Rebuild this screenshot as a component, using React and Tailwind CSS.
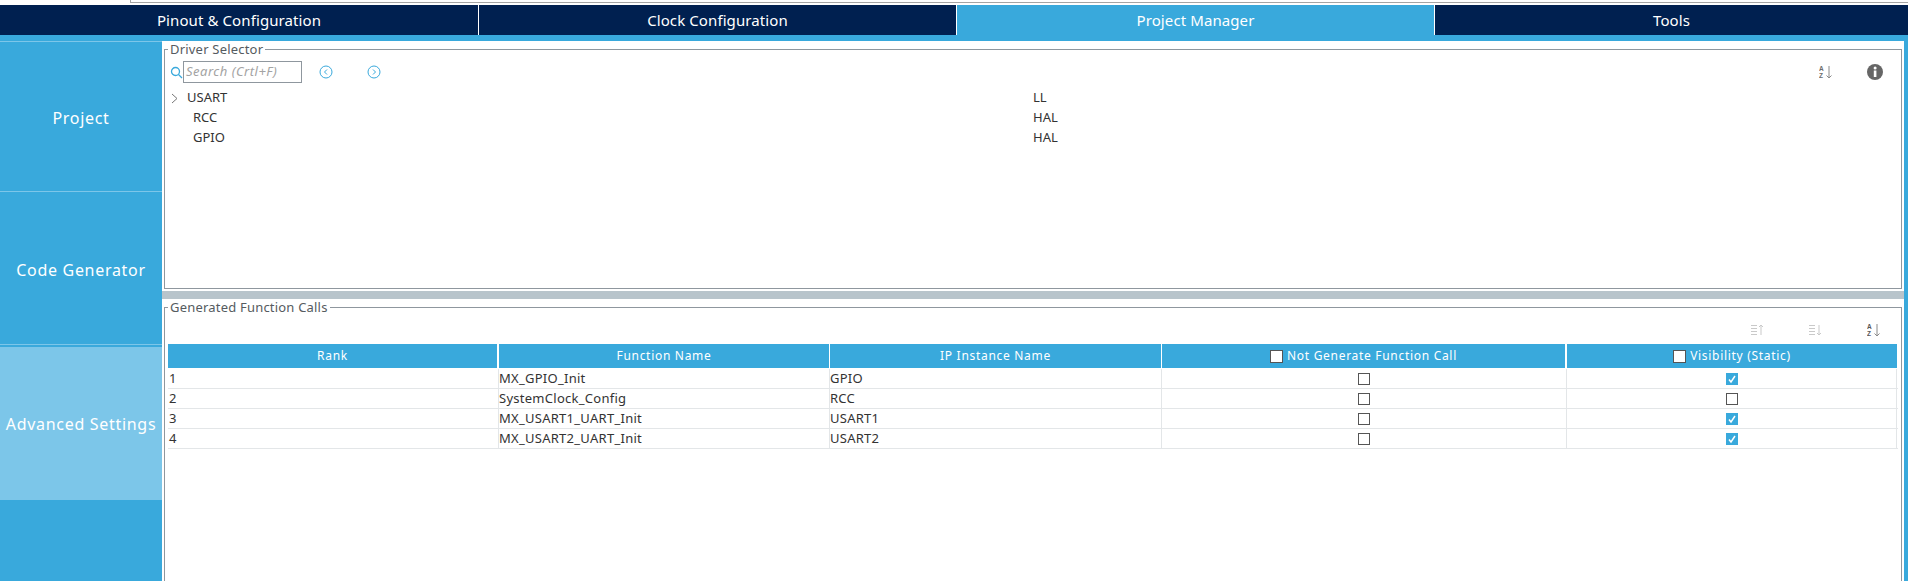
import React from 'react';

const tabs = ['Pinout & Configuration', 'Clock Configuration', 'Project Manager', 'Tools'];

const drivers = [
  { name: 'USART', lib: 'LL', expandable: true },
  { name: 'RCC', lib: 'HAL' },
  { name: 'GPIO', lib: 'HAL' },
];

const calls = [
  { rank: 1, fn: 'MX_GPIO_Init', ip: 'GPIO', visible: true },
  { rank: 2, fn: 'SystemClock_Config', ip: 'RCC', visible: false },
  { rank: 3, fn: 'MX_USART1_UART_Init', ip: 'USART1', visible: true },
  { rank: 4, fn: 'MX_USART2_UART_Init', ip: 'USART2', visible: true },
];

const COLS = 'grid grid-cols-[329px_2px_330px_1px_331px_1px_403px_2px_330px]';

function SortAz({ color = '#6b6b6b' }) {
  return (
    <svg width="14" height="14" viewBox="0 0 14 14" fill="none">
      <text x="0" y="6" fontSize="6.5" fontWeight="700" fontFamily="Liberation Sans, sans-serif" fill={color}>A</text>
      <text x="0" y="13" fontSize="6.5" fontWeight="700" fontFamily="Liberation Sans, sans-serif" fill={color}>Z</text>
      <path d="M10 1v12M7.5 10.5 10 13l2.5-2.5" stroke="#8a8a8a" strokeWidth="1" />
    </svg>
  );
}

function SortLines({ up }) {
  return (
    <svg width="14" height="12" viewBox="0 0 14 12" fill="none" stroke="#c9c9c9">
      <path d="M0 1.5h6M0 4.5h6M0 7.5h6M0 10.5h6" />
      <path d={up ? 'M10 11V1M8 3l2-2 2 2' : 'M10 1v10M8 9l2 2 2-2'} />
    </svg>
  );
}

function CircleChevron({ left }) {
  return (
    <svg width="14" height="14" viewBox="0 0 14 14" fill="none" stroke="#39a9dc">
      <circle cx="7" cy="7" r="6" strokeWidth="1" />
      <path d={left ? 'M8 4.5 5.5 7 8 9.5' : 'M6 4.5 8.5 7 6 9.5'} strokeWidth="1" />
    </svg>
  );
}

function Check({ checked, header }) {
  if (checked) {
    return (
      <span className="flex h-[12px] w-[12px] items-center justify-center bg-[#39a9dc]">
        <svg width="10" height="10" viewBox="0 0 10 10" fill="none" stroke="#fff" strokeWidth="1.5">
          <path d="M2 5.5 4 8l4-6" />
        </svg>
      </span>
    );
  }
  return <span className={`block border border-[#555] ${header ? 'h-[13px] w-[13px] bg-white' : 'h-[12px] w-[12px]'}`} />;
}

function Panel({ title, className, children }) {
  return (
    <fieldset className={`mx-[2px] min-w-0 border border-[#8f979e] ${className}`}>
      <legend className="ml-[3px] px-[2px] text-[13px] leading-[16px] tracking-[0.2px] text-[#555b60]">{title}</legend>
      {children}
    </fieldset>
  );
}

export default function App() {
  return (
    <div className="flex h-[581px] w-full flex-col overflow-hidden bg-white font-['Noto_Sans',sans-serif]">
      {/* strip of the window above the tabs */}
      <div className="h-[5px] shrink-0">
        <div className="ml-[130px] h-[3px] border-b border-l border-[#a5a5a5]" />
      </div>

      <div className="grid h-[30px] shrink-0 grid-cols-[479px_478px_478px_1fr] bg-[#002050]">
        {tabs.map((t, i) => (
          <div
            key={t}
            className={`flex items-center justify-center text-[15px] tracking-[0.1px] text-white ${i < 3 ? 'border-r border-white' : ''} ${t === 'Project Manager' ? 'bg-[#39a9dc]' : ''}`}
          >
            {t}
          </div>
        ))}
      </div>

      <div className="h-[6px] shrink-0 bg-[#39a9dc]" />

      <div className="flex min-h-0 flex-1">
        {/* left nav */}
        <div className="flex w-[162px] shrink-0 flex-col bg-[#39a9dc] text-[16px] tracking-[0.7px] text-white">
          <div className="flex h-[151px] items-center justify-center border-t border-b border-[#7cc6e9] pt-[2px]">Project</div>
          <div className="flex h-[153px] items-center justify-center border-b border-[#7cc6e9] pt-[3px]">Code Generator</div>
          <div className="mt-[2px] flex h-[153px] items-center justify-center bg-[#7cc6e9]">Advanced Settings</div>
        </div>

        <div className="flex min-w-0 flex-1 flex-col">
          <Panel title="Driver Selector" className="h-[248px] shrink-0">
            <div className="mt-[4px] flex h-[22px] items-center">
              <svg className="ml-[5px]" width="13" height="13" viewBox="0 0 13 13" fill="none" stroke="#39a9dc" strokeWidth="1.3">
                <circle cx="5.5" cy="5.5" r="4" />
                <path d="m8.5 8.5 3.5 3.5" />
              </svg>
              <div className="flex h-[22px] w-[119px] items-center border border-[#8f979e] px-[2px] text-[13px] italic tracking-[0.5px] text-[#a3a3a3]">
                Search (Crtl+F)
              </div>
              <span className="ml-[17px]"><CircleChevron left /></span>
              <span className="ml-[34px]"><CircleChevron /></span>
              <span className="ml-auto"><SortAz /></span>
              <svg className="ml-[34px] mr-[18px]" width="16" height="16" viewBox="0 0 16 16">
                <circle cx="8" cy="8" r="8" fill="#666" />
                <rect x="6.8" y="6.5" width="2.6" height="6.5" fill="#fff" />
                <circle cx="8.1" cy="4" r="1.5" fill="#fff" />
              </svg>
            </div>
            <div className="mt-[5px] text-[13px] text-[#333]">
              {drivers.map((d) => (
                <div key={d.name} className="flex h-[20px] items-center">
                  <span className="flex w-[22px] shrink-0 pl-[6px]">
                    {d.expandable && (
                      <svg width="8" height="11" viewBox="0 0 8 11" fill="none" stroke="#777">
                        <path d="m1 1 5 4.5L1 10" />
                      </svg>
                    )}
                  </span>
                  <span className={`shrink-0 ${d.expandable ? 'w-[846px]' : 'ml-[6px] w-[840px]'}`}>{d.name}</span>
                  <span>{d.lib}</span>
                </div>
              ))}
            </div>
          </Panel>

          <div className="mt-[2px] h-[8px] shrink-0 bg-[#b8c4cb]" />

          {/* runs past the bottom of the window, so no bottom edge shows */}
          <Panel title="Generated Function Calls" className="-mb-[2px] min-h-0 flex-1">
            <div className="flex h-[29px] items-center justify-end pr-[20px]">
              <span className="mr-[44px]"><SortLines up /></span>
              <span className="mr-[44px]"><SortLines /></span>
              <SortAz color="#555" />
            </div>
            <div className="ml-[3px] w-[1730px] text-[13px] tracking-[0.27px] text-[#333]">
              <div className={`${COLS} mb-[1px] h-[24px] text-[12px] tracking-[0.7px] text-white`}>
                <div className="flex items-center justify-center bg-[#39a9dc]">Rank</div>
                <div />
                <div className="flex items-center justify-center bg-[#39a9dc]">Function Name</div>
                <div />
                <div className="flex items-center justify-center bg-[#39a9dc]">IP Instance Name</div>
                <div />
                <div className="flex items-center justify-center gap-[4px] bg-[#39a9dc]"><Check header />Not Generate Function Call</div>
                <div />
                <div className="flex items-center justify-center gap-[4px] bg-[#39a9dc]"><Check header />Visibility (Static)</div>
              </div>
              {calls.map((c) => (
                <div key={c.rank} className={`${COLS} h-[20px] border-b border-[#e3e6e8]`}>
                  <div className="flex items-center pl-[1px]">{c.rank}</div>
                  <div className="border-r border-[#e3e6e8]" />
                  <div className="flex items-center">{c.fn}</div>
                  <div className="border-r border-[#e3e6e8]" />
                  <div className="flex items-center">{c.ip}</div>
                  <div className="border-r border-[#e3e6e8]" />
                  <div className="flex items-center justify-center"><Check /></div>
                  <div className="border-r border-[#e3e6e8]" />
                  <div className="flex items-center justify-center border-r border-[#e3e6e8]"><Check checked={c.visible} /></div>
                </div>
              ))}
            </div>
          </Panel>
        </div>

        <div className="w-[4px] shrink-0 bg-[#39a9dc]" />
      </div>
    </div>
  );
}
